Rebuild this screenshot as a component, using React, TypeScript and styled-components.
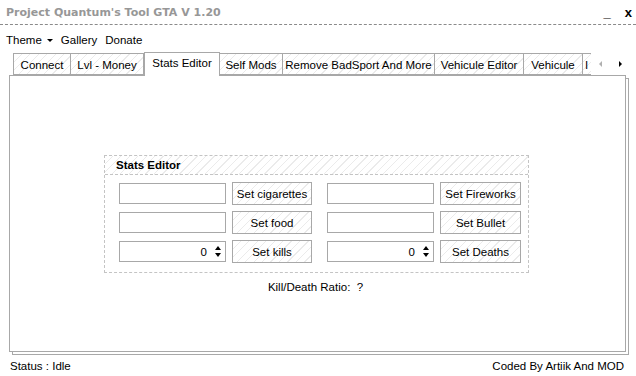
import styled, { createGlobalStyle } from "styled-components";

const GlobalStyle = createGlobalStyle`
  html, body {
    margin: 0;
    padding: 0;
    background: #ffffff;
  }
  body {
    font-family: "Liberation Sans", Arial, sans-serif;
    font-size: 11px;
    color: #000000;
  }
`;

const hatch = `repeating-linear-gradient(135deg, #ffffff 0px, #ffffff 5px, #ebebeb 5px, #ebebeb 6px)`;

const Window = styled.div`
  width: 636px;
  height: 376px;
  display: flex;
  flex-direction: column;
  overflow: hidden;
  background: #ffffff;
`;

const TitleBar = styled.div`
  height: 25px;
  display: flex;
  align-items: center;
  justify-content: space-between;
  padding: 0 4px 0 6px;
  border-bottom: 1px dashed #8a8a8a;
  box-sizing: border-box;
`;

const Title = styled.span`
  font-family: "DejaVu Sans", sans-serif;
  font-weight: 700;
  font-size: 11px;
  color: #979797;
`;

const Controls = styled.div`
  display: flex;
  align-items: center;
  gap: 14px;
  font-weight: 700;
  font-size: 13px;
`;

const MenuBar = styled.div`
  height: 27px;
  display: flex;
  align-items: center;
  gap: 8px;
  padding: 2px 0 0 6px;
  box-sizing: border-box;
`;

const MenuItem = styled.span`
  display: flex;
  align-items: center;
  gap: 5px;
  font-size: 11.5px;
`;

const Caret = styled.span`
  width: 0;
  height: 0;
  border-left: 3px solid transparent;
  border-right: 3px solid transparent;
  border-top: 3px solid #000;
  margin-top: 1px;
`;

const TabStrip = styled.div`
  display: flex;
  align-items: flex-end;
  height: 23px;
  padding-left: 13px;
`;

const Tabs = styled.div`
  display: flex;
  align-items: flex-end;
  position: relative;
  z-index: 1;
`;

const Tab = styled.div<{ $w: number; $active?: boolean; $first?: boolean }>`
  flex: none;
  width: ${(p) => p.$w}px;
  height: ${(p) => (p.$active ? 24 : 22)}px;
  margin-bottom: ${(p) => (p.$active ? -1 : 0)}px;
  box-sizing: border-box;
  border: 1px solid #a8a8a8;
  border-bottom: ${(p) => (p.$active ? "none" : "1px solid #a8a8a8")};
  border-left-width: ${(p) => (p.$first || p.$active ? 1 : 0)}px;
  background: ${(p) => (p.$active ? "#ffffff" : hatch)};
  display: flex;
  align-items: center;
  justify-content: center;
  padding-top: ${(p) => (p.$active ? 0 : 1)}px;
  padding-bottom: ${(p) => (p.$active ? 3 : 0)}px;
  white-space: nowrap;
  font-size: 11.5px;
`;

const PartialTab = styled.div`
  flex: none;
  width: 8px;
  height: 22px;
  box-sizing: border-box;
  border-top: 1px solid #a8a8a8;
  border-bottom: 1px solid #a8a8a8;
  background: ${hatch};
  display: flex;
  align-items: center;
  padding: 1px 0 0 2px;
  font-size: 11.5px;
`;

const Arrows = styled.div`
  display: flex;
  align-items: center;
  gap: 17px;
  height: 22px;
  padding-left: 8px;
`;

const Arrow = styled.span<{ $dir: "l" | "r"; $off?: boolean }>`
  width: 0;
  height: 0;
  border-top: 3px solid transparent;
  border-bottom: 3px solid transparent;
  ${(p) =>
    p.$dir === "l"
      ? `border-right: 3px solid ${p.$off ? "#b0b0b0" : "#000"};`
      : `border-left: 3px solid ${p.$off ? "#b0b0b0" : "#000"};`}
`;

const Panel = styled.div`
  margin: 0 10px 0 9px;
  height: 277px;
  box-sizing: border-box;
  border: 1px solid #a8a8a8;
  box-shadow: 3px 3px 0 -1px #ffffff, 3px 3px 0 0 #a8a8a8;
  display: flex;
  flex-direction: column;
  align-items: center;
  padding: 79px 0 0 0;
`;

const Group = styled.div`
  width: 425px;
  margin-left: -2px;
  border: 1px dashed #c4c4c4;
  box-sizing: border-box;
`;

const GroupHeader = styled.div`
  height: 18px;
  display: flex;
  align-items: center;
  padding-left: 11px;
  background: ${hatch};
  border-bottom: 1px dashed #c4c4c4;
  font-weight: 700;
  font-size: 11.5px;
`;

const Grid = styled.div`
  display: grid;
  grid-template-columns: 107px 80px 116px 81px;
  column-gap: 6px;
  row-gap: 6px;
  padding: 7px 0 9px 14px;
  align-items: center;

  & > :nth-child(4n + 3) {
    justify-self: end;
    width: 107px;
  }
`;

const Field = styled.div`
  height: 21px;
  box-sizing: border-box;
  border: 1px solid #a8a8a8;
  background: #ffffff;
  display: flex;
  align-items: center;
  justify-content: flex-end;
  padding-right: 4px;
  font-size: 11.5px;
`;

const Spin = styled.span`
  display: flex;
  flex-direction: column;
  gap: 3px;
  margin-left: 8px;
`;

const Tri = styled.span<{ $up?: boolean }>`
  width: 0;
  height: 0;
  border-left: 3px solid transparent;
  border-right: 3px solid transparent;
  ${(p) => (p.$up ? "border-bottom: 4px solid #000;" : "border-top: 4px solid #000;")}
`;

const Button = styled.div`
  height: 23px;
  box-sizing: border-box;
  border: 1px solid #a8a8a8;
  background: ${hatch};
  display: flex;
  align-items: center;
  justify-content: center;
  white-space: nowrap;
  font-size: 11.5px;
`;

const Ratio = styled.div`
  margin-top: 8px;
  font-size: 11.5px;
  margin-left: -4px;
  white-space: pre;
`;

const StatusBar = styled.div`
  flex: 1;
  display: flex;
  align-items: center;
  justify-content: space-between;
  padding: 4px 12px 0 10px;
  font-size: 11.5px;
`;

function Spinner() {
  return (
    <Field>
      0
      <Spin>
        <Tri $up />
        <Tri />
      </Spin>
    </Field>
  );
}

const tabs = [
  { label: "Connect", w: 58 },
  { label: "Lvl - Money", w: 73 },
  { label: "Stats Editor", w: 76, active: true },
  { label: "Self Mods", w: 63 },
  { label: "Remove BadSport And More", w: 152 },
  { label: "Vehicule Editor", w: 89 },
  { label: "Vehicule", w: 59 },
];

function App() {
  return (
    <>
      <GlobalStyle />
      <Window>
        <TitleBar>
          <Title>Project Quantum's Tool GTA V 1.20</Title>
          <Controls>
            <span>_</span>
            <span>x</span>
          </Controls>
        </TitleBar>
        <MenuBar>
          <MenuItem>
            Theme <Caret />
          </MenuItem>
          <MenuItem>Gallery</MenuItem>
          <MenuItem>Donate</MenuItem>
        </MenuBar>
        <TabStrip>
          <Tabs>
            {tabs.map((t, i) => (
              <Tab key={t.label} $w={t.w} $active={t.active} $first={i === 0}>
                {t.label}
              </Tab>
            ))}
            <PartialTab>I</PartialTab>
          </Tabs>
          <Arrows>
            <Arrow $dir="l" $off />
            <Arrow $dir="r" />
          </Arrows>
        </TabStrip>
        <Panel>
          <Group>
            <GroupHeader>Stats Editor</GroupHeader>
            <Grid>
              <Field />
              <Button>Set cigarettes</Button>
              <Field />
              <Button>Set Fireworks</Button>
              <Field />
              <Button>Set food</Button>
              <Field />
              <Button>Set Bullet</Button>
              <Spinner />
              <Button>Set kills</Button>
              <Spinner />
              <Button>Set Deaths</Button>
            </Grid>
          </Group>
          <Ratio>Kill/Death Ratio:  ?</Ratio>
        </Panel>
        <StatusBar>
          <span>Status : Idle</span>
          <span>Coded By Artiik And MOD</span>
        </StatusBar>
      </Window>
    </>
  );
}

export default App;
